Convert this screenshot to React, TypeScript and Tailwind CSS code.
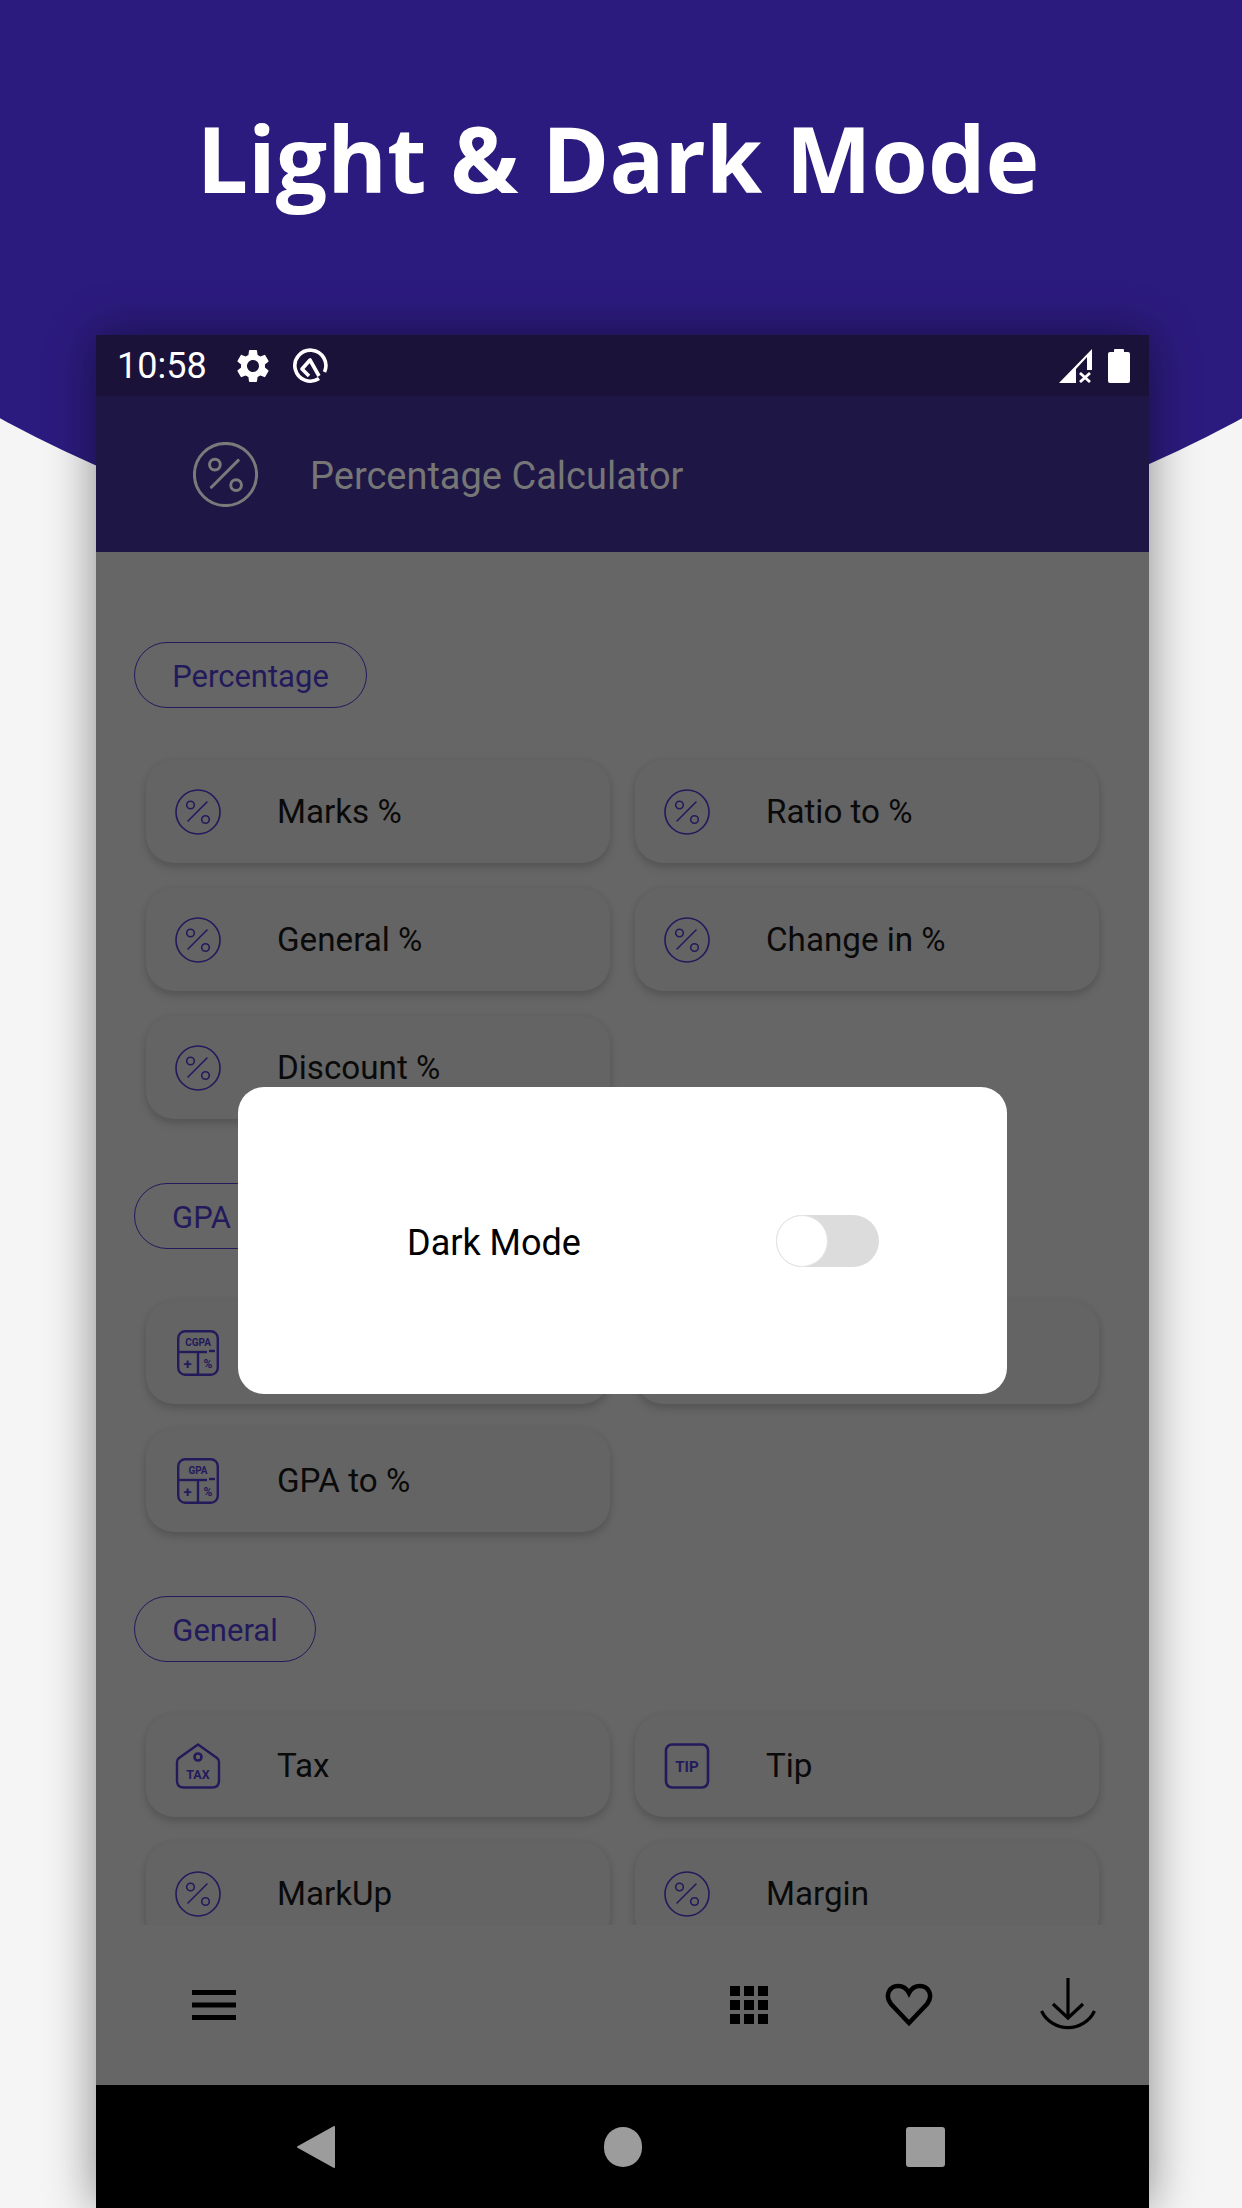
import React from "react";
import { MdSettings } from "react-icons/md";

const ink = "#231a5c";

const PercentIcon = ({ className = "w-[46px] h-[46px]", color = ink, sw = 1.6 }: { className?: string; color?: string; sw?: number }) => (
  <svg viewBox="0 0 46 46" className={className} fill="none" stroke={color} strokeWidth={sw}>
    <circle cx="23" cy="23" r="22" />
    <line x1="13" y1="32" x2="32" y2="13" strokeLinecap="round" />
    <circle cx="15.5" cy="16" r="3.8" />
    <circle cx="30.5" cy="30.5" r="3.8" />
  </svg>
);

const CalcIcon = ({ label }: { label: string }) => (
  <svg viewBox="0 0 42 46" className="w-[42px] h-[46px] mx-[2px]" fill="none" stroke={ink} strokeWidth="2.4">
    <rect x="1.2" y="1.2" width="39.6" height="43.6" rx="7" />
    <line x1="1" y1="22" x2="30" y2="22" />
    <line x1="21" y1="22" x2="21" y2="45" />
    <line x1="32" y1="21" x2="38" y2="21" />
    <text x="21" y="15.500" textAnchor="middle" stroke="none" fill={ink} fontFamily="Roboto, sans-serif" fontWeight="700" fontSize="10">{label}</text>
    <text x="10.5" y="39" textAnchor="middle" stroke="none" fill={ink} fontFamily="Roboto, sans-serif" fontWeight="700" fontSize="15">+</text>
    <text x="31" y="37.500" textAnchor="middle" stroke="none" fill={ink} fontFamily="Roboto, sans-serif" fontWeight="700" fontSize="12">%</text>
  </svg>
);

const TaxIcon = () => (
  <svg viewBox="0 0 46 46" className="w-[46px] h-[46px]" fill="none" stroke={ink} strokeWidth="2.4">
    <path d="M23 1.500 L42 15 Q44 16.500 44 19 V38 Q44 44.500 37 44.500 H9 Q2 44.500 2 38 V19 Q2 16.500 4 15 Z" strokeLinejoin="round" />
    <circle cx="23" cy="14" r="3.500" strokeWidth="2.600" />
    <text x="23" y="36" textAnchor="middle" stroke="none" fill={ink} fontFamily="Roboto, sans-serif" fontWeight="700" fontSize="12.500">TAX</text>
  </svg>
);

const TipIcon = () => (
  <svg viewBox="0 0 46 46" className="w-[46px] h-[46px]" fill="none" stroke={ink} strokeWidth="2.600">
    <rect x="2" y="1.500" width="42" height="43" rx="6" />
    <text x="23" y="28.500" textAnchor="middle" stroke="none" fill={ink} fontFamily="Roboto, sans-serif" fontWeight="700" fontSize="15">TIP</text>
  </svg>
);

const Card = ({ icon, label }: { icon: React.ReactNode; label?: string }) => (
  <div className="h-[103px] rounded-[28px] bg-[#646464] shadow-[0_5px_9px_rgba(0,0,0,0.15),0_0_7px_rgba(0,0,0,0.05)] flex items-center pl-[29px]">
    <div className="w-[46px] flex justify-center shrink-0">{icon}</div>
    {label && <span className="ml-[56px] text-[33.2px] leading-none text-[#0a0a0a]">{label}</span>}
  </div>
);

const Chip = ({ label, className }: { label: string; className: string }) => (
  <div className={`h-[66px] rounded-full border border-[#231a5c] ml-[38px] flex items-center justify-center text-[31px] leading-none text-[#231a5c] pt-[2px] ${className}`}>
    {label}
  </div>
);

const Cards = ({ children }: { children: React.ReactNode }) => (
  <div className="grid grid-cols-[464px_464px] gap-[25px] ml-[50px] mt-[52px]">{children}</div>
);

export default function App() {
  return (
    <div className="w-[1242px] h-[2208px] overflow-hidden bg-[#f5f5f5] font-['Roboto',sans-serif]">
      <header className="h-[576px] bg-[#2c1b7e] [clip-path:circle(1302px_at_50%_-726px)] pt-[99px] text-center">
        <h1 className="font-['Open_Sans',sans-serif] font-bold text-[91px] leading-[118px] text-white pr-[6px]">Light &amp; Dark Mode</h1>
      </header>

      <div className="relative w-[1053px] ml-[96px] -mt-[241px] h-[1873px] flex flex-col shadow-[0_0_45px_rgba(0,0,0,0.45)]">
        {/* status bar */}
        <div className="h-[61px] shrink-0 bg-[#1a1239] flex items-center pl-[21px] pr-[19px] text-white">
          <span className="text-[36px] leading-none">10:58</span>
          <MdSettings className="w-[40px] h-[40px] ml-[26px]" />
          <svg viewBox="0 0 36 36" className="w-[36px] h-[36px] ml-[19px]" fill="none" stroke="white">
            <path d="M27 30.500 A15.500 15.500 0 1 1 32.500 24" strokeWidth="3.600" />
            <path d="M27 28 L18 12 L10 21 L17 28" strokeWidth="3.600" strokeLinejoin="round" />
          </svg>
          <svg viewBox="0 0 34 34" className="w-[34px] h-[34px] ml-auto" fill="white">
            <path d="M33 0 V21 H28 V8 L17 20 V34 H0 Z" />
            <path d="M21 24 L31 33 M31 24 L21 33" stroke="white" strokeWidth="2.800" fill="none" />
          </svg>
          <svg viewBox="0 0 22 34" className="w-[22px] h-[34px] ml-[15px]" fill="white">
            <rect x="0" y="3" width="22" height="31" rx="2" />
            <rect x="6" y="0" width="10" height="5" rx="1" />
          </svg>
        </div>

        {/* app bar */}
        <div className="h-[156px] shrink-0 bg-[#1e1745] flex items-center pl-[97px]">
          <PercentIcon className="w-[65px] h-[65px]" color="#7a7a7a" sw={2.1} />
          <span className="ml-[52px] text-[38px] leading-none text-[#767676] pt-[3px]">Percentage Calculator</span>
        </div>

        {/* list */}
        <div className="flex-1 overflow-hidden bg-[#666666] pt-[90px]">
          <Chip label="Percentage" className="w-[233px]" />
          <Cards>
            <Card icon={<PercentIcon />} label="Marks %" />
            <Card icon={<PercentIcon />} label="Ratio to %" />
            <Card icon={<PercentIcon />} label="General %" />
            <Card icon={<PercentIcon />} label="Change in %" />
            <Card icon={<PercentIcon />} label="Discount %" />
          </Cards>

          <Chip label="GPA" className="w-[135px] mt-[64px]" />
          <Cards>
            <Card icon={<CalcIcon label="CGPA" />} />
            <Card icon={<CalcIcon label="CGPA" />} />
            <Card icon={<CalcIcon label="GPA" />} label="GPA to %" />
          </Cards>

          <Chip label="General" className="w-[182px] mt-[64px]" />
          <Cards>
            <Card icon={<TaxIcon />} label="Tax" />
            <Card icon={<TipIcon />} label="Tip" />
            <Card icon={<PercentIcon />} label="MarkUp" />
            <Card icon={<PercentIcon />} label="Margin" />
          </Cards>
        </div>

        {/* bottom bar */}
        <div className="h-[160px] shrink-0 bg-[#666666] flex items-center pl-[96px] pr-[53px]">
          <svg viewBox="0 0 44 30" className="w-[44px] h-[30px]" fill="#000">
            <rect y="0" width="44" height="5" />
            <rect y="12.500" width="44" height="5" />
            <rect y="25" width="44" height="5" />
          </svg>
          <svg viewBox="0 0 38 38" className="w-[38px] h-[38px] ml-auto" fill="#000">
            {[0, 14, 28].map((y) =>
              [0, 14, 28].map((x) => <rect key={`${x}-${y}`} x={x} y={y} width="10" height="10" />)
            )}
          </svg>
          <svg viewBox="0 0 48 44" className="w-[48px] h-[44px] ml-[117px]" fill="none" stroke="#000" strokeWidth="4.500" strokeLinejoin="miter">
            <path d="M24 40 L6 21 C-1 12 5 3 13 3 C18 3 22 6 24 10 C26 6 30 3 35 3 C43 3 49 12 42 21 Z" />
          </svg>
          <svg viewBox="0 0 56 56" className="w-[56px] h-[56px] ml-[107px]" fill="none" stroke="#000" strokeWidth="3.200">
            <line x1="28" y1="1" x2="28" y2="41" />
            <path d="M13 27 L28 41 L43 27" />
            <path d="M1.500 34 A29.400 29.400 0 0 0 54.500 34" />
          </svg>
        </div>

        {/* nav bar */}
        <div className="h-[123px] shrink-0 bg-black flex items-center pl-[201px]">
          <svg viewBox="0 0 38 42" className="w-[38px] h-[42px]" fill="#9c9c9c" stroke="#9c9c9c" strokeWidth="2" strokeLinejoin="round">
            <path d="M37 1 V41 L1 21 Z" />
          </svg>
          <div className="w-[38px] h-[40px] rounded-full bg-[#9c9c9c] ml-[269px]" />
          <div className="w-[39px] h-[40px] rounded-[3px] bg-[#9c9c9c] ml-[264px]" />
        </div>

        {/* dark mode dialog */}
        <div className="absolute left-[142px] top-[752px] w-[769px] h-[307px] rounded-[26px] bg-white flex items-center pl-[169px]">
          <span className="text-[36px] leading-none text-black pt-[5px]">Dark Mode</span>
          <div className="ml-[195px] w-[103px] h-[52px] rounded-full bg-[#dcdcdc]">
            <div className="w-[52px] h-[52px] rounded-full bg-white border border-[#e4e4e4]" />
          </div>
        </div>
      </div>
    </div>
  );
}
